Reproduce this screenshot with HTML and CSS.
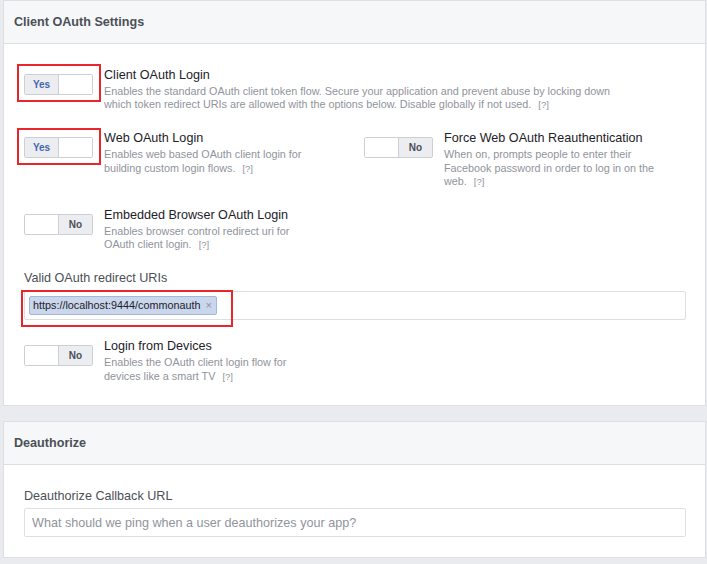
FILE: index.html
```html
<!DOCTYPE html>
<html>
<head>
<meta charset="utf-8">
<link rel="stylesheet" href="styles.css">
</head>
<body>
<div class="page">
  <section class="panel">
    <header class="panel-head">Client OAuth Settings</header>
    <div class="panel-body">
      <div class="row">
        <div class="setting">
          <div class="toggle-wrap">
            <div class="toggle on"><span class="half yes">Yes</span><span class="half blank"></span></div>
            <span class="mark mark-toggle"></span>
          </div>
          <div class="text wide">
            <div class="title">Client OAuth Login</div>
            <div class="desc">Enables the standard OAuth client token flow. Secure your application and prevent abuse by locking down which token redirect URIs are allowed with the options below. Disable globally if not used. <span class="help">[?]</span></div>
          </div>
        </div>
      </div>
      <div class="row two">
        <div class="setting">
          <div class="toggle-wrap">
            <div class="toggle on"><span class="half yes">Yes</span><span class="half blank"></span></div>
            <span class="mark mark-toggle2"></span>
          </div>
          <div class="text">
            <div class="title">Web OAuth Login</div>
            <div class="desc">Enables web based OAuth client login for building custom login flows. <span class="help">[?]</span></div>
          </div>
        </div>
        <div class="setting">
          <div class="toggle-wrap">
            <div class="toggle off"><span class="half blank"></span><span class="half no">No</span></div>
          </div>
          <div class="text">
            <div class="title">Force Web OAuth Reauthentication</div>
            <div class="desc">When on, prompts people to enter their Facebook password in order to log in on the web. <span class="help">[?]</span></div>
          </div>
        </div>
      </div>
      <div class="row">
        <div class="setting">
          <div class="toggle-wrap">
            <div class="toggle off"><span class="half blank"></span><span class="half no">No</span></div>
          </div>
          <div class="text">
            <div class="title">Embedded Browser OAuth Login</div>
            <div class="desc">Enables browser control redirect uri for OAuth client login. <span class="help">[?]</span></div>
          </div>
        </div>
      </div>
      <div class="field">
        <label class="label">Valid OAuth redirect URIs</label>
        <div class="input-wrap">
          <div class="input tokens"><span class="token">https://localhost:9444/commonauth<span class="x">×</span></span></div>
          <span class="mark mark-input"></span>
        </div>
      </div>
      <div class="row last">
        <div class="setting">
          <div class="toggle-wrap">
            <div class="toggle off"><span class="half blank"></span><span class="half no">No</span></div>
          </div>
          <div class="text">
            <div class="title">Login from Devices</div>
            <div class="desc">Enables the OAuth client login flow for devices like a smart TV <span class="help">[?]</span></div>
          </div>
        </div>
      </div>
    </div>
  </section>
  <section class="panel">
    <header class="panel-head">Deauthorize</header>
    <div class="panel-body body2">
      <div class="field nomargin">
        <label class="label">Deauthorize Callback URL</label>
        <div class="input placeholder">What should we ping when a user deauthorizes your app?</div>
      </div>
    </div>
  </section>
</div>
</body>
</html>
```

FILE: styles.css
```css
* { box-sizing: border-box; }
html, body { margin: 0; padding: 0; }
body {
  background: #e9ebee;
  font-family: "Liberation Sans", Arial, sans-serif;
  color: #1d2129;
  width: 707px;
  height: 564px;
  overflow: hidden;
}
.page { padding: 0 1px 0 3px; }
.panel {
  background: #fff;
  border: 1px solid #dddfe2;
  margin-bottom: 15px;
}
.panel-head {
  height: 43px;
  background: #f6f7f9;
  border-bottom: 1px solid #dddfe2;
  display: flex;
  align-items: center;
  padding: 0 10px;
  font-size: 12.6px;
  font-weight: bold;
  color: #4b4f56;
}
.panel-body { padding: 23px 19px 22px 20px; }
.body2 { padding: 23px 19px 20px 20px; }
.row { margin-bottom: 18.5px; }
.row.two { display: grid; grid-template-columns: 340px 1fr; }
.row.last { margin-bottom: 0; }
.setting { display: flex; align-items: flex-start; }
.toggle-wrap { position: relative; margin-top: 7px; margin-right: 11px; flex: none; }
.toggle {
  width: 69px;
  height: 21px;
  border: 1px solid #ccd0d5;
  border-radius: 2px;
  display: flex;
  overflow: hidden;
}
.half {
  flex: 1;
  display: flex;
  align-items: center;
  justify-content: center;
  font-size: 10px;
  font-weight: bold;
}
.yes { background: #ebedf0; color: #4267b2; border-right: 1px solid #ccd0d5; }
.no { background: #ebedf0; color: #4b4f56; border-left: 1px solid #ccd0d5; }
.blank { background: #fff; }
.mark {
  position: absolute;
  border: 2px solid #e8262b;
  pointer-events: none;
}
.mark-toggle { left: -7px; top: -10px; width: 84px; height: 38px; }
.mark-toggle2 { left: -7px; top: -9px; width: 84px; height: 37px; }
.mark-input { left: -3px; top: -1px; width: 212px; height: 37px; }
.text { width: 214px; }
.text.wide { width: 520px; }
.title { font-size: 12.6px; line-height: 16px; color: #1d2129; }
.desc { font-size: 10.8px; line-height: 13.4px; color: #90949c; margin-top: 2px; }
.help { font-size: 9.5px; margin-left: 4px; }
.field { margin-top: 20.5px; margin-bottom: 18.5px; }
.row + .field { margin-top: 3px; }
.field.nomargin { margin: 0; }
.label { display: block; font-size: 12.6px; line-height: 16px; color: #4b4f56; margin-bottom: 4.4px; }
.input-wrap { position: relative; }
.input {
  height: 29px;
  border: 1px solid #dddfe2;
  border-radius: 2px;
  background: #fff;
}
.tokens { padding: 4px 4px; display: flex; align-items: flex-start; }
.token {
  height: 19px;
  display: inline-flex;
  align-items: center;
  padding: 0 4px 0 3px;
  background: #c9d6ec;
  border: 1px solid #a3b7da;
  border-radius: 2px;
  font-size: 10.8px;
  color: #1d2129;
}
.x { color: #90949c; margin-left: 5px; font-size: 11px; }
.placeholder {
  display: flex;
  align-items: center;
  padding: 0 7px;
  font-size: 12.6px;
  color: #90949c;
}
```
